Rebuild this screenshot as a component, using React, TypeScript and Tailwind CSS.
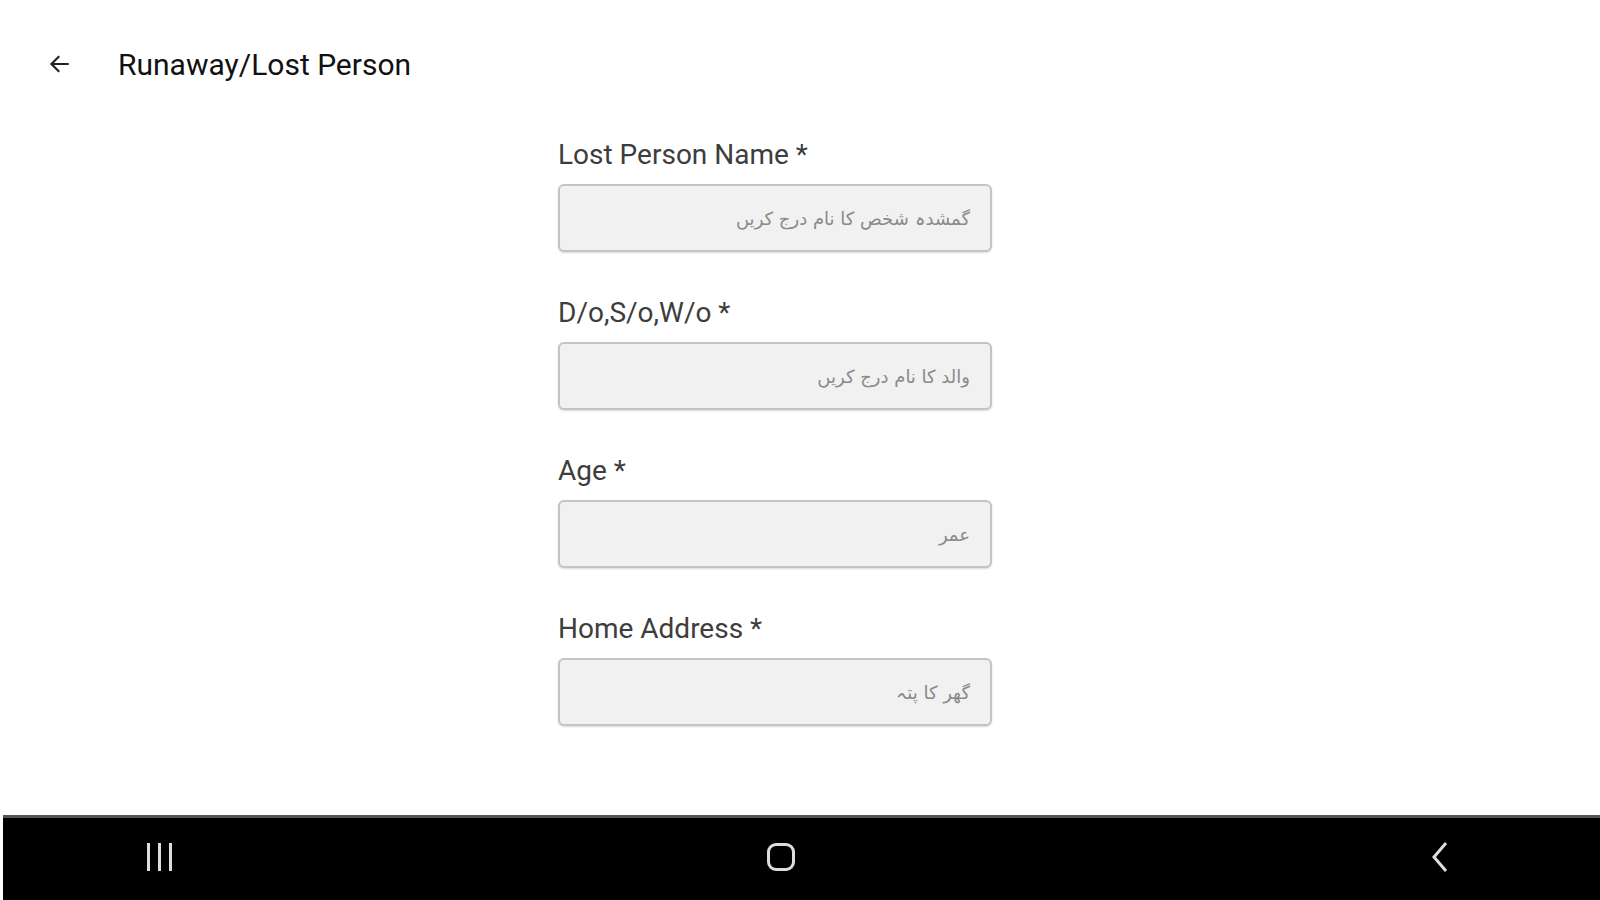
import React from "react";

const fields = [
  { label: "Lost Person Name *", placeholder: "گمشدہ شخص کا نام درج کریں" },
  { label: "D/o,S/o,W/o *", placeholder: "والد کا نام درج کریں" },
  { label: "Age *", placeholder: "عمر" },
  { label: "Home Address *", placeholder: "گھر کا پتہ" },
];

function BackArrow() {
  return (
    <svg width="26" height="26" viewBox="0 0 24 24" fill="none">
      <path
        d="M20 12H5.5M11.5 5.5L5 12l6.5 6.5"
        stroke="#222"
        strokeWidth="2"
        strokeLinecap="square"
      />
    </svg>
  );
}

function Field({ label, placeholder }: { label: string; placeholder: string }) {
  return (
    <div className="flex flex-col gap-[13px]">
      <label className="text-[28px] leading-[32px] text-[#3d3d3d]">{label}</label>
      <div className="h-[68px] rounded-[6px] border-2 border-[#c4c4c4] bg-[#f1f1f1] shadow-[0_1px_2px_rgba(0,0,0,0.15)] flex items-center justify-end px-[20px]">
        <span
          dir="rtl"
          className="text-[18px] text-[#8a8a8a]"
          style={{ fontFamily: '"DejaVu Sans", sans-serif' }}
        >
          {placeholder}
        </span>
      </div>
    </div>
  );
}

export default function App() {
  return (
    <div
      className="w-[1600px] h-[900px] flex flex-col bg-white overflow-hidden"
      style={{ fontFamily: 'Roboto, "Noto Sans", sans-serif' }}
    >
      <div className="flex-1 flex flex-col">
        <div className="h-[124px] flex items-center pl-[46px] pt-[4px]">
          <BackArrow />
          <h1 className="ml-[46px] text-[30px] text-[#111]">Runaway/Lost Person</h1>
        </div>
        <div className="pl-[558px] pt-[15px]">
          <div className="w-[434px] flex flex-col gap-[45px]">
            {fields.map((f) => (
              <Field key={f.label} label={f.label} placeholder={f.placeholder} />
            ))}
          </div>
        </div>
      </div>

      {/* system nav bar */}
      <div className="h-[85px] ml-[3px] bg-black border-t-[3px] border-[#555] flex items-center pb-[5px]">
        <div className="w-[312px] flex justify-center">
          <div className="flex gap-[8px]">
            <div className="w-[3px] h-[28px] bg-[#ddd]" />
            <div className="w-[3px] h-[28px] bg-[#ddd]" />
            <div className="w-[3px] h-[28px] bg-[#ddd]" />
          </div>
        </div>
        <div className="flex-1 flex justify-center pr-[34px]">
          <div className="w-[28px] h-[28px] rounded-[9px] border-[3px] border-[#ddd]" />
        </div>
        <div className="w-[320px] flex justify-center">
          <svg width="20" height="32" viewBox="0 0 20 32" fill="none">
            <path d="M16 2L4 16l12 14" stroke="#ddd" strokeWidth="3" />
          </svg>
        </div>
      </div>
    </div>
  );
}
